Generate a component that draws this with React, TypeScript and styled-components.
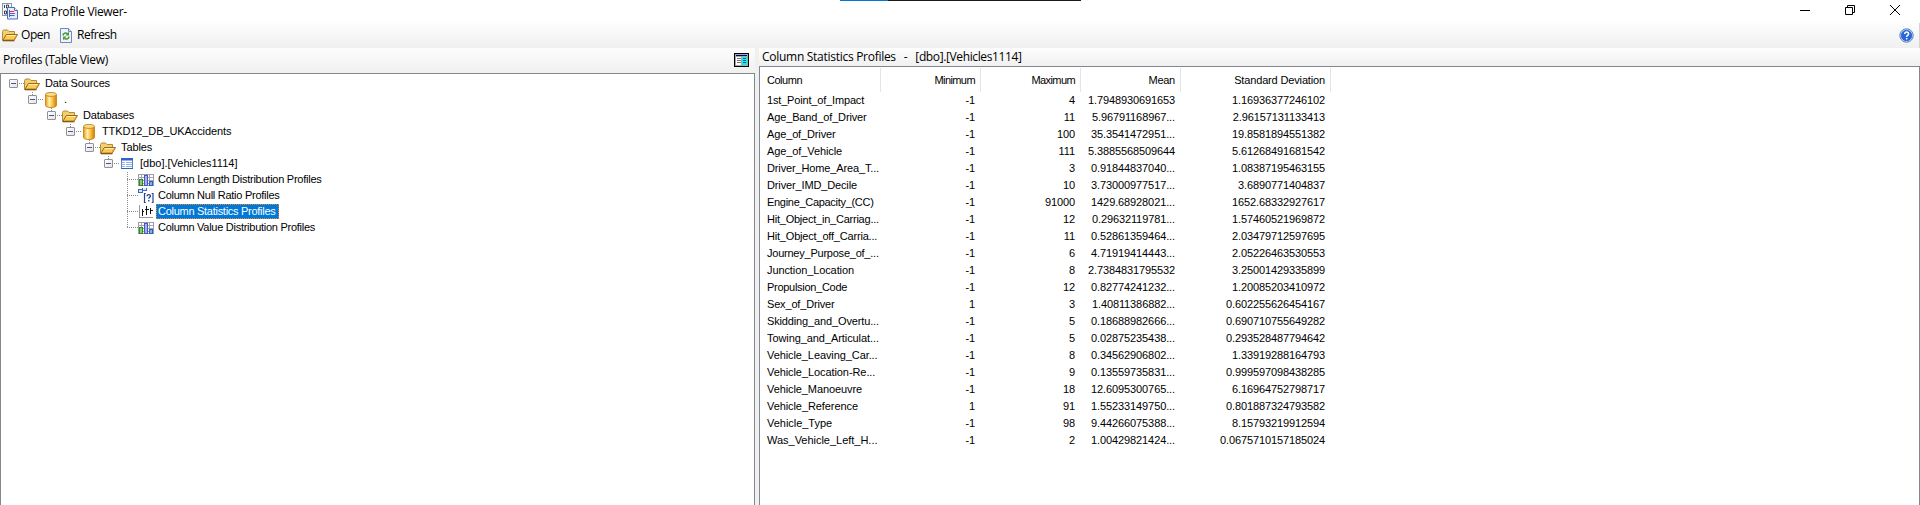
import React from 'react';
import styled, { createGlobalStyle, css } from 'styled-components';

const GlobalStyle = createGlobalStyle`
  * { box-sizing: border-box; }
  body { margin: 0; background: #fff; color: #000; overflow: hidden; }
  svg { display: block; flex: none; }
`;

const uiFont = css`font-family: 'Open Sans', 'Noto Sans', sans-serif; font-size: 12px;`;
const gridFont = css`font-family: 'Liberation Sans', Arial, sans-serif; font-size: 11px;`;
const barFill = 'linear-gradient(#fdfdfd, #f0f0f0)';
const edge = '#828790';

const Window = styled.div`
  height: 505px;
  display: flex;
  flex-direction: column;
  background: #fff;
`;

const TopStrip = styled.div`
  position: absolute;
  top: 0;
  left: 840px;
  width: 241px;
  height: 1px;
  background: linear-gradient(90deg, #0078d7 48px, #1c1a1c 48px);
`;

const TitleBar = styled.header`
  height: 23px;
  flex: none;
  display: flex;
  align-items: center;
  padding: 0 20px 0 2px;
  ${uiFont}
`;

const UiText = styled.span<{ $tracking?: number }>`
  ${uiFont}
  line-height: 16px;
  white-space: pre;
  letter-spacing: ${p => p.$tracking ?? -0.33}px;
`;

const Title = styled(UiText)`margin: 1px auto 0 5px;`;

const WindowButtons = styled.div`
  display: flex;
  gap: 35px;
  margin-top: -3px;
`;

const ToolBar = styled.nav`
  height: 25px;
  flex: none;
  display: flex;
  align-items: center;
  padding: 0 5px 1px 2px;
  background: ${barFill};
  border-right: 1px solid #d4d4d4;
`;

const ToolButton = styled.div<{ $gap: number }>`
  display: flex;
  align-items: center;
  gap: ${p => p.$gap}px;
  margin-right: 10px;
`;

const HelpSlot = styled.div`margin-left: auto;`;

const Panels = styled.main`
  flex: 1;
  min-height: 0;
  display: grid;
  grid-template-columns: 755px 1fr;
  column-gap: 4px;
  background: #f0f0f0;
`;

const Panel = styled.section`
  display: flex;
  flex-direction: column;
  min-width: 0;
`;

const PanelHeader = styled.div<{ $height: number }>`
  height: ${p => p.$height}px;
  flex: none;
  display: flex;
  align-items: center;
  justify-content: space-between;
  padding: 0 6px 1px 3px;
  background: ${barFill};
`;

const PanelCaption = styled.div`
  display: flex;
  gap: 8px;
`;

const PanelBody = styled.div`
  flex: 1;
  background: #fff;
  border: 1px solid ${edge};
  border-bottom: 0;
`;

const Tree = styled(PanelBody)`padding: 2px 0 0 8px;`;

const TreeRow = styled.div<{ $level: number }>`
  height: 16px;
  display: flex;
  align-items: center;
  padding-left: ${p => p.$level * 19}px;
`;

const dotsX = 'repeating-linear-gradient(90deg, #8c8c8c 0 1px, transparent 1px 2px)';
const dotsY = 'repeating-linear-gradient(#8c8c8c 0 1px, transparent 1px 2px)';

const Branch = styled.div<{ $kind: 'root' | 'node' | 'leaf' | 'last' }>`
  width: 15px;
  height: 16px;
  padding-top: 3px;
  background-repeat: no-repeat;
  background-image: ${dotsX}, ${dotsY};
  background-position: ${p => (p.$kind === 'root' || p.$kind === 'node' ? '10px' : '4px')} 7px, 4px 0;
  background-size: 11px 1px, 1px ${p => ({ root: 0, node: 3, leaf: 16, last: 8 })[p.$kind]}px;
`;

const Expander = styled.div`
  width: 9px;
  height: 9px;
  padding: 3px 1px;
  border: 1px solid #919191;
  border-radius: 1px;
  background: linear-gradient(135deg, #fff, #e4e4e4);
  &::after {
    content: '';
    display: block;
    height: 1px;
    background: #3e55a3;
  }
`;

const NodeIcon = styled.div`
  width: 16px;
  height: 16px;
  flex: none;
`;

const NodeLabel = styled.span<{ $tracking: number; $leaf: boolean; $selected?: boolean }>`
  ${gridFont}
  height: 15px;
  line-height: 15px;
  margin: 0 0 1px ${p => (p.$leaf ? 2 : 3)}px;
  padding: 0 2px;
  white-space: pre;
  letter-spacing: ${p => p.$tracking}px;
  ${p => p.$selected && css`
    background: #0078d7;
    color: #fff;
    outline: 1px dotted #e58728;
    outline-offset: -1px;
    padding-right: 3px;
  `}
`;

const columns = '121px 100px 100px 100px 150px';

const HeaderRow = styled.div`
  display: grid;
  grid-template-columns: ${columns};
  height: 24px;
  margin: 1px 0 0;
`;

const HeaderCell = styled.div<{ $left?: boolean; $tracking: number }>`
  ${gridFont}
  line-height: 24px;
  padding: 0 ${p => (p.$left ? 6 : 5)}px 0 7px;
  text-align: ${p => (p.$left ? 'left' : 'right')};
  border-right: 1px solid #e5e5e5;
  letter-spacing: ${p => p.$tracking}px;
`;

const DataRow = styled.div`
  display: grid;
  grid-template-columns: ${columns};
  height: 17px;
`;

const Cell = styled.div<{ $left?: boolean; $tracking?: number }>`
  ${gridFont}
  line-height: 17px;
  padding: 0 6px 0 7px;
  white-space: pre;
  text-align: ${p => (p.$left ? 'left' : 'right')};
  letter-spacing: ${p => p.$tracking ?? -0.11}px;
`;

const FolderIcon = () => (
  <svg width="16" height="16" viewBox="0 0 16 16">
    <path d="M.5 13.500v-9l1-1.500h4l1.500 1.500h5.500v3.500" fill="#f4cf6b" stroke="#b08a3e" />
    <path d="M.8 13.500 4.300 7.500h11.200L12 13.500z" fill="#fbcb55" stroke="#946a20" />
    <path d="M4.800 8.500h9" stroke="#fff1ae" />
    <path d="M2.500 12.600h9.300l2.500-4.100" fill="none" stroke="#dd9f2b" />
    <path d="M1 13.800h11.500" stroke="#6f5221" />
  </svg>
);

const DatabaseIcon = () => (
  <svg width="16" height="16" viewBox="0 0 16 16">
    <defs>
      <linearGradient id="drum">
        <stop offset="0" stopColor="#e79a1c" />
        <stop offset=".35" stopColor="#fff0a8" />
        <stop offset=".65" stopColor="#f9bf3d" />
        <stop offset="1" stopColor="#c97b10" />
      </linearGradient>
    </defs>
    <path d="M2.500 2.500v11c0 2.600 11 2.600 11 0v-11" fill="url(#drum)" stroke="#cf8a22" />
    <ellipse cx="8" cy="2.400" rx="5.500" ry="2" fill="#fbdc85" stroke="#c99032" />
  </svg>
);

const TableIcon = () => (
  <svg width="16" height="16" viewBox="0 0 16 16">
    <rect x="2.500" y="2.500" width="11" height="10" fill="#fff" stroke="#5b86d6" />
    <rect x="2" y="2" width="12" height="2.500" fill="#2f62c8" />
    <path d="M3 6.500h10M3 8.500h10M3 10.500h10" stroke="#8fb0ea" />
    <path d="M6.500 5v7" stroke="#fff" />
    <path d="M2 12.500h12" stroke="#3763b5" />
  </svg>
);

const DistributionIcon = () => (
  <svg width="16" height="16" viewBox="0 0 16 16" shapeRendering="crispEdges">
    <rect x=".5" y="2.500" width="15" height="11" fill="#fff" stroke="#9c9aa8" />
    <path d="M0 5.500h16M0 8.500h16M0 11.500h16M3.500 2v12M7.500 2v12M11.500 2v12" stroke="#a5a3b3" />
    <rect x="1.500" y="7.500" width="3" height="6" fill="#7fd065" stroke="#2f8a2a" />
    <rect x="6.500" y="3.500" width="3" height="10" fill="#a6b2f3" stroke="#4a57b8" />
    <rect x="11.500" y="9.500" width="3" height="4" fill="#7db1f5" stroke="#2b60c4" />
  </svg>
);

const NullIcon = () => (
  <svg width="16" height="16" viewBox="0 0 16 16">
    <rect x="4.500" y="-1.500" width="4" height="4" fill="#dbe8fc" stroke="#3a68bf" />
    <rect x=".5" y="1.500" width="4" height="3" fill="#dbe8fc" stroke="#3a68bf" />
    <path d="M7.800 5.500H6.500v9h1.300M13.700 5.500H15v9h-1.300" fill="none" stroke="#23468f" strokeWidth="1.200" />
    <path d="M9 8.200c0-2 3.600-2 3.400 0-.1 1-1.600 1.200-1.600 2.600" fill="none" stroke="#1f3f92" strokeWidth="1.300" />
    <rect x="10.100" y="12" width="1.400" height="1.400" fill="#1f3f92" />
  </svg>
);

const StatisticsIcon = () => (
  <svg width="16" height="16" viewBox="0 0 16 16" shapeRendering="crispEdges">
    <rect width="16" height="16" fill="#fff" />
    <path d="M1.500 1v12.500M1 13.500h14" stroke="#9a9a9a" fill="none" />
    <path d="M4.500 5v7M8.500 2v9M12.500 4v6M5 7.500h1M7 5.500h1M9 5.500h2M13 6.500h2" stroke="#111" fill="none" />
  </svg>
);

const AppIcon = () => (
  <svg width="16" height="17" viewBox="0 0 16 17">
    <rect x=".5" y=".5" width="9" height="12" fill="#f3f6fb" stroke="#8b99ad" />
    <path d="M2.500 2v3M4.500 2h2v3h-2zM2.500 8h2v3h-2z" stroke="#444" fill="none" />
    <path d="M5.500 4.500h7l3 3v8.500h-10z" fill="#e3edff" stroke="#4f6fb0" />
    <path d="M12.500 4.500v3h3" fill="#fff" stroke="#4f6fb0" />
    <path d="M7.500 7v7M7.500 12.500h5" stroke="#3567d0" />
    <path d="M8 8.500h4M8 10.500h5" stroke="#d43b4d" />
  </svg>
);

const RefreshIcon = () => (
  <svg width="12" height="15" viewBox="0 0 12 15">
    <path d="M.5.5h8l3 3v11H.5z" fill="#eef4ff" stroke="#7388b5" />
    <path d="M8.500.5v3h3" fill="#cddaf3" stroke="#7388b5" />
    <path d="M3 7.500c0-2.600 3-3 4.500-1.800" fill="none" stroke="#3f9a35" strokeWidth="1.500" />
    <path d="M9 3.800v3.800H5.500z" fill="#3f9a35" />
    <path d="M9 8.500c0 2.600-3 3-4.500 1.800" fill="none" stroke="#5b8f31" strokeWidth="1.500" />
    <path d="M3 12.200V8.400h3.500z" fill="#5b8f31" />
  </svg>
);

const HelpIcon = () => (
  <svg width="15" height="15" viewBox="0 0 15 15">
    <circle cx="7.500" cy="7.500" r="6.700" fill="#dbe8fb" stroke="#5580c4" />
    <circle cx="7.500" cy="7.500" r="5.300" fill="#2766dc" stroke="#1d4cae" strokeWidth=".6" />
    <path d="M5.600 6c0-2.600 4.200-2.500 4 0-.1 1.300-2 1.400-2 3" fill="none" stroke="#fff" strokeWidth="1.500" />
    <rect x="6.900" y="10" width="1.500" height="1.500" fill="#fff" />
  </svg>
);

const ViewIcon = () => (
  <svg width="15" height="14" viewBox="0 0 15 14" shapeRendering="crispEdges">
    <rect width="15" height="14" fill="#000" />
    <rect x="1" y="1" width="13" height="12" fill="#a8a8a8" />
    <rect x="2" y="2" width="11" height="1" fill="#00007c" />
    <rect x="2" y="4" width="5" height="8" fill="#fff" />
    <rect x="8" y="4" width="5" height="8" fill="#00f3f8" />
    <path d="M3 5.500h4M3 7.500h4M3 9.500h4" stroke="#777" />
    <path d="M9 5.500h3M9 7.500h3M9 9.500h3" stroke="#00607c" />
  </svg>
);

const MinimizeIcon = () => (
  <svg width="10" height="10" viewBox="0 0 10 10"><path d="M0 5.500h10" stroke="#000" /></svg>
);
const RestoreIcon = () => (
  <svg width="10" height="10" viewBox="0 0 10 10">
    <path d="M.5 2.500h7v7h-7zM2.500 2V.5h7v7H8" fill="none" stroke="#000" />
  </svg>
);
const CloseIcon = () => (
  <svg width="10" height="10" viewBox="0 0 10 10"><path d="M0 0l10 10M10 0L0 10" stroke="#000" /></svg>
);

type Node = {
  label: string;
  level: number;
  kind: 'root' | 'node' | 'leaf' | 'last';
  icon: React.FC;
  tracking: number;
  selected?: boolean;
};

const nodes: Node[] = [
  { label: 'Data Sources', level: 0, kind: 'root', icon: FolderIcon, tracking: -0.14 },
  { label: '.', level: 1, kind: 'node', icon: DatabaseIcon, tracking: 0 },
  { label: 'Databases', level: 2, kind: 'node', icon: FolderIcon, tracking: -0.18 },
  { label: 'TTKD12_DB_UKAccidents', level: 3, kind: 'node', icon: DatabaseIcon, tracking: -0.1 },
  { label: 'Tables', level: 4, kind: 'node', icon: FolderIcon, tracking: -0.1 },
  { label: '[dbo].[Vehicles1114]', level: 5, kind: 'node', icon: TableIcon, tracking: 0 },
  { label: 'Column Length Distribution Profiles', level: 6, kind: 'leaf', icon: DistributionIcon, tracking: -0.255 },
  { label: 'Column Null Ratio Profiles', level: 6, kind: 'leaf', icon: NullIcon, tracking: -0.265 },
  { label: 'Column Statistics Profiles', level: 6, kind: 'leaf', icon: StatisticsIcon, tracking: -0.277, selected: true },
  { label: 'Column Value Distribution Profiles', level: 6, kind: 'last', icon: DistributionIcon, tracking: -0.268 },
];

const headers: [string, number][] = [
  ['Column', -0.48],
  ['Minimum', -0.58],
  ['Maximum', -0.6],
  ['Mean', -0.25],
  ['Standard Deviation', -0.15],
];

// name, name letter spacing, minimum, maximum, mean, standard deviation
const rows: [string, number, string, string, string, string][] = [
  ['1st_Point_of_Impact', -0.17, '-1', '4', '1.7948930691653', '1.16936377246102'],
  ['Age_Band_of_Driver', -0.14, '-1', '11', '5.96791168967...', '2.96157131133413'],
  ['Age_of_Driver', -0.14, '-1', '100', '35.3541472951...', '19.8581894551382'],
  ['Age_of_Vehicle', -0.1, '-1', '111', '5.3885568509644', '5.61268491681542'],
  ['Driver_Home_Area_T...', -0.14, '-1', '3', '0.91844837040...', '1.08387195463155'],
  ['Driver_IMD_Decile', -0.14, '-1', '10', '3.73000977517...', '3.6890771404837'],
  ['Engine_Capacity_(CC)', -0.3, '-1', '91000', '1429.68928021...', '1652.68332927617'],
  ['Hit_Object_in_Carriag...', -0.23, '-1', '12', '0.29632119781...', '1.57460521969872'],
  ['Hit_Object_off_Carria...', -0.19, '-1', '11', '0.52861359464...', '2.03479712597695'],
  ['Journey_Purpose_of_...', -0.23, '-1', '6', '4.71919414443...', '2.05226463530553'],
  ['Junction_Location', -0.1, '-1', '8', '2.7384831795532', '3.25001429335899'],
  ['Propulsion_Code', -0.29, '-1', '12', '0.82774241232...', '1.20085203410972'],
  ['Sex_of_Driver', -0.17, '1', '3', '1.40811386882...', '0.602255626454167'],
  ['Skidding_and_Overtu...', -0.14, '-1', '5', '0.18688982666...', '0.690710755649282'],
  ['Towing_and_Articulat...', -0.08, '-1', '5', '0.02875235438...', '0.293528487794642'],
  ['Vehicle_Leaving_Car...', -0.09, '-1', '8', '0.34562906802...', '1.33919288164793'],
  ['Vehicle_Location-Re...', -0.08, '-1', '9', '0.13559735831...', '0.999597098438285'],
  ['Vehicle_Manoeuvre', -0.09, '-1', '18', '12.6095300765...', '6.16964752798717'],
  ['Vehicle_Reference', -0.08, '1', '91', '1.55233149750...', '0.801887324793582'],
  ['Vehicle_Type', -0.03, '-1', '98', '9.44266075388...', '8.15793219912594'],
  ['Was_Vehicle_Left_H...', -0.02, '-1', '2', '1.00429821424...', '0.0675710157185024'],
];

export default function App() {
  return (
    <Window>
      <GlobalStyle />
      <TopStrip />
      <TitleBar>
        <AppIcon />
        <Title>Data Profile Viewer-</Title>
        <WindowButtons>
          <MinimizeIcon />
          <RestoreIcon />
          <CloseIcon />
        </WindowButtons>
      </TitleBar>
      <ToolBar>
        <ToolButton $gap={3}>
          <FolderIcon />
          <UiText $tracking={-0.45}>Open</UiText>
        </ToolButton>
        <ToolButton $gap={5}>
          <RefreshIcon />
          <UiText $tracking={-0.45}>Refresh</UiText>
        </ToolButton>
        <HelpSlot><HelpIcon /></HelpSlot>
      </ToolBar>
      <Panels>
        <Panel>
          <PanelHeader $height={25}>
            <UiText>Profiles (Table View)</UiText>
            <ViewIcon />
          </PanelHeader>
          <Tree>
            {nodes.map(({ icon: Icon, ...n }) => (
              <TreeRow key={n.label} $level={n.level}>
                <Branch $kind={n.kind}>{n.level < 6 && <Expander />}</Branch>
                <NodeIcon><Icon /></NodeIcon>
                <NodeLabel $tracking={n.tracking} $leaf={n.level === 6} $selected={n.selected}>{n.label}</NodeLabel>
              </TreeRow>
            ))}
          </Tree>
        </Panel>
        <Panel>
          <PanelHeader $height={18}>
            <PanelCaption>
              <UiText $tracking={-0.28}>Column Statistics Profiles</UiText>
              <UiText>-</UiText>
              <UiText $tracking={-0.38}>[dbo].[Vehicles1114]</UiText>
            </PanelCaption>
          </PanelHeader>
          <PanelBody>
            <HeaderRow>
              {headers.map(([name, tracking], i) => (
                <HeaderCell key={name} $left={i === 0} $tracking={tracking}>{name}</HeaderCell>
              ))}
            </HeaderRow>
            {rows.map(([name, tracking, ...values]) => (
              <DataRow key={name}>
                <Cell $left $tracking={tracking}>{name}</Cell>
                {values.map((v, i) => <Cell key={i}>{v}</Cell>)}
              </DataRow>
            ))}
          </PanelBody>
        </Panel>
      </Panels>
    </Window>
  );
}
